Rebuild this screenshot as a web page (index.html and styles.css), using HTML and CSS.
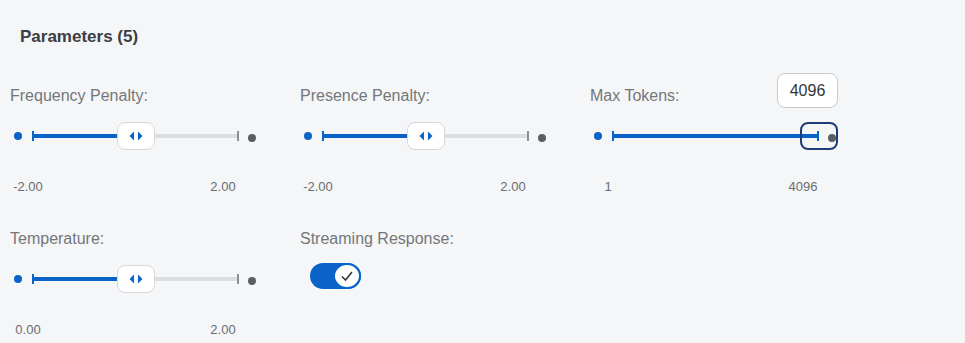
FILE: index.html
```html
<!DOCTYPE html>
<html lang="en">
<head>
    <meta charset="UTF-8">
    <title>Parameters</title>
    <link rel="stylesheet" href="styles.css">
</head>
<body>
    <div class="panel">
        <div class="title">Parameters (5)</div>

        <div class="params">
            <!-- Frequency Penalty -->
            <div class="field">
                <div class="field-label">Frequency Penalty:</div>
                <div class="slider">
                    <span class="dot dot-min"></span>
                    <div class="track">
                        <div class="fill" style="width: 50%"></div>
                        <span class="tick tick-start"></span>
                        <span class="tick tick-end"></span>
                        <div class="handle" style="left: 50%">
                            <svg width="18" height="12" viewBox="0 0 18 12"><polygon points="7,1.5 2.5,6 7,10.5" /><polygon points="11,1.5 15.5,6 11,10.5" /></svg>
                        </div>
                    </div>
                    <span class="dot dot-max"></span>
                </div>
                <div class="values"><span>-2.00</span><span>2.00</span></div>
            </div>

            <!-- Presence Penalty -->
            <div class="field">
                <div class="field-label">Presence Penalty:</div>
                <div class="slider">
                    <span class="dot dot-min"></span>
                    <div class="track">
                        <div class="fill" style="width: 50%"></div>
                        <span class="tick tick-start"></span>
                        <span class="tick tick-end"></span>
                        <div class="handle" style="left: 50%">
                            <svg width="18" height="12" viewBox="0 0 18 12"><polygon points="7,1.5 2.5,6 7,10.5" /><polygon points="11,1.5 15.5,6 11,10.5" /></svg>
                        </div>
                    </div>
                    <span class="dot dot-max"></span>
                </div>
                <div class="values"><span>-2.00</span><span>2.00</span></div>
            </div>

            <!-- Max Tokens -->
            <div class="field">
                <div class="field-label">Max Tokens:</div>
                <div class="slider">
                    <span class="dot dot-min"></span>
                    <div class="track">
                        <div class="fill" style="width: 100%"></div>
                        <span class="tick tick-start"></span>
                        <span class="tick tick-end tick-on"></span>
                        <div class="handle handle-focus" style="left: 100%">
                            <div class="tooltip">4096</div>
                        </div>
                    </div>
                    <span class="dot dot-max"></span>
                </div>
                <div class="values"><span>1</span><span>4096</span></div>
            </div>

            <!-- Temperature -->
            <div class="field">
                <div class="field-label">Temperature:</div>
                <div class="slider">
                    <span class="dot dot-min"></span>
                    <div class="track">
                        <div class="fill" style="width: 50%"></div>
                        <span class="tick tick-start"></span>
                        <span class="tick tick-end"></span>
                        <div class="handle" style="left: 50%">
                            <svg width="18" height="12" viewBox="0 0 18 12"><polygon points="7,1.5 2.5,6 7,10.5" /><polygon points="11,1.5 15.5,6 11,10.5" /></svg>
                        </div>
                    </div>
                    <span class="dot dot-max"></span>
                </div>
                <div class="values"><span>0.00</span><span>2.00</span></div>
            </div>

            <!-- Streaming Response -->
            <div class="field">
                <div class="field-label">Streaming Response:</div>
                <div class="toggle">
                    <span class="knob">
                        <svg width="14" height="12" viewBox="0 0 14 12"><polyline points="2,6.5 5.5,10 12,2" /></svg>
                    </span>
                </div>
            </div>
        </div>
    </div>
</body>
</html>
```

FILE: styles.css
```css
* {
    margin: 0;
    padding: 0;
    box-sizing: border-box;
}

body {
    background-color: #f5f6f7;
    font-family: "Liberation Sans", Arial, sans-serif;
    color: #32363a;
}

.panel {
    padding: 28px 0 0 10px;
}

.title {
    margin-left: 10px;
    font-size: 17px;
    font-weight: bold;
    line-height: 18px;
    color: #3b3e42;
    margin-bottom: 40px;
}

/* Parameter grid */
.params {
    display: grid;
    grid-template-columns: repeat(3, 290px);
    row-gap: 34px;
}

.field-label {
    font-size: 16px;
    line-height: 20px;
    color: #74777a;
}

/* Slider */
.slider {
    display: flex;
    align-items: center;
    height: 30px;
    margin-top: 15px;
}

.dot {
    width: 8px;
    height: 8px;
    border-radius: 50%;
    flex-shrink: 0;
}

.dot-min {
    background-color: #0a64c8;
    margin-left: 4px;
    margin-right: 10px;
}

.dot-max {
    background-color: #5b5e62;
    margin-left: 9px;
    margin-top: 4px;
}

.track {
    position: relative;
    width: 207px;
    height: 4px;
    background-color: #dcdee0;
    border-radius: 2px;
}

.fill {
    position: absolute;
    left: 0;
    top: 0;
    height: 100%;
    background-color: #0a64c8;
    border-radius: 2px;
}

.tick {
    position: absolute;
    top: -3px;
    width: 2px;
    height: 10px;
}

.tick-start {
    left: 0;
    background-color: #0a64c8;
}

.tick-end {
    right: 0;
    background-color: #8c9094;
}

.tick-end.tick-on {
    background-color: #0a64c8;
}

.handle {
    position: absolute;
    top: 50%;
    width: 38px;
    height: 28px;
    transform: translate(-50%, -50%);
    background-color: #fff;
    border: 1px solid #d5d9de;
    border-radius: 8px;
    display: flex;
    align-items: center;
    justify-content: center;
}

.handle svg {
    fill: #0a64c8;
}

.handle-focus {
    background-color: transparent;
    border: 2px solid #1d3d78;
}

.tooltip {
    position: absolute;
    bottom: calc(100% + 16px);
    right: -2px;
    width: 61px;
    height: 35px;
    background-color: #fff;
    border: 1px solid #c6cbd0;
    border-radius: 8px;
    font-size: 16px;
    line-height: 33px;
    text-align: center;
    color: #32363a;
}

.values {
    display: flex;
    justify-content: space-between;
    width: 231px;
    margin-top: 28px;
}

.values span {
    width: 36px;
    text-align: center;
    font-size: 13px;
    line-height: 16px;
    color: #6a6d70;
}

/* Toggle */
.toggle {
    display: flex;
    align-items: center;
    justify-content: flex-end;
    width: 51px;
    height: 26px;
    margin-top: 14px;
    margin-left: 10px;
    border-radius: 13px;
    background-color: #0a64c8;
}

.knob {
    display: flex;
    align-items: center;
    justify-content: center;
    width: 28px;
    height: 26px;
    border-radius: 50%;
    background-color: #fff;
    border: 2px solid #0a64c8;
}

.knob svg {
    fill: none;
    stroke: #32363a;
    stroke-width: 1.6;
}
```
